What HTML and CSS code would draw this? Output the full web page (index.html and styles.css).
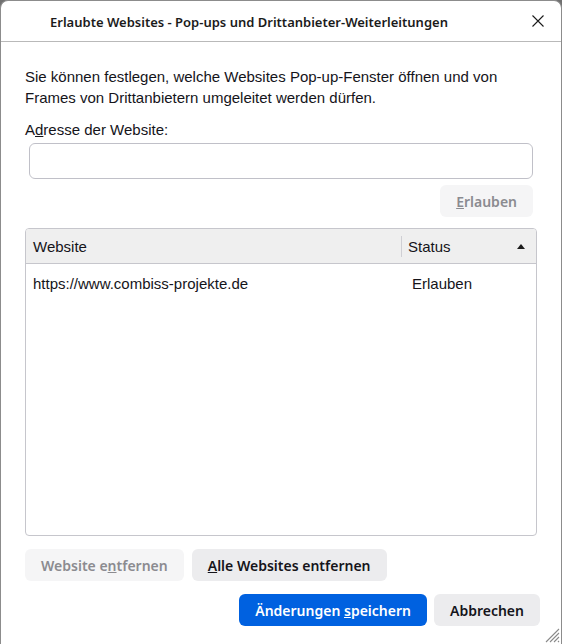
FILE: index.html
```html
<!DOCTYPE html>
<html lang="de">
<head>
<meta charset="utf-8">
<title>Erlaubte Websites</title>
<link rel="stylesheet" href="styles.css">
</head>
<body>
<div class="window">
  <div class="titlebar">
    <div class="title">Erlaubte Websites - Pop-ups und Drittanbieter-Weiterleitungen</div>
    <div class="close">
      <svg width="12" height="12" viewBox="0 0 12 12"><path d="M0.5 0.5 L11.5 11.5 M11.5 0.5 L0.5 11.5" stroke="#1b1b1b" stroke-width="1.1" fill="none"/></svg>
    </div>
  </div>
  <div class="content">
    <p class="desc">Sie können festlegen, welche Websites Pop-up-Fenster öffnen und von Frames von Drittanbietern umgeleitet werden dürfen.</p>
    <label class="label">A<u>d</u>resse der Website:</label>
    <input class="address" type="text">
    <div class="allow-row">
      <button class="btn disabled"><u>E</u>rlauben</button>
    </div>
    <div class="table">
      <div class="thead">
        <div class="th th-site">Website</div>
        <div class="th th-status"><span>Status</span>
          <svg class="sort" width="8" height="5" viewBox="0 0 8 5"><path d="M0 5 L4 0 L8 5 Z" fill="#1b1b1b"/></svg>
        </div>
      </div>
      <div class="tbody">
        <div class="tr">
          <div class="td td-site">https://www.combiss-projekte.de</div>
          <div class="td td-status">Erlauben</div>
        </div>
      </div>
    </div>
    <div class="remove-row">
      <button class="btn disabled">Website e<u>n</u>tfernen</button>
      <button class="btn"><u>A</u>lle Websites entfernen</button>
    </div>
    <div class="actions">
      <button class="btn primary">Änderungen <u>s</u>peichern</button>
      <button class="btn">Abbrechen</button>
    </div>
  </div>
  <svg class="grip" width="16" height="16" viewBox="0 0 16 16"><path d="M15 2 L2 15 M15 6 L6 15 M15 10 L10 15 M15 14 L14 15" stroke="#8a8a8a" stroke-width="1.1" fill="none"/></svg>
</div>
</body>
</html>
```

FILE: styles.css
```css
html, body {
  margin: 0;
  padding: 0;
  height: 100%;
  background: #707070;
}
body {
  font-family: "Liberation Sans", Arial, sans-serif;
  color: #15141a;
  font-size: 15px;
}
.window {
  position: relative;
  box-sizing: border-box;
  height: 100vh;
  background: #ffffff;
  border: 1px solid #8c8c8c;
  border-bottom: none;
  border-radius: 8px 8px 0 0;
  display: flex;
  flex-direction: column;
  overflow: hidden;
}
.titlebar {
  height: 40px;
  flex: none;
  display: flex;
  align-items: center;
  border-bottom: 1px solid #b9b9b9;
}
.title {
  flex: 1;
  text-align: center;
  font-family: "Noto Sans", sans-serif;
  font-weight: 600;
  font-size: 13px;
  color: #1b1b1b;
  padding-top: 1px;
}
.close {
  width: 64px;
  display: flex;
  justify-content: center;
  align-items: center;
  padding-left: 18px;
  box-sizing: border-box;
}
.content {
  flex: 1;
  display: flex;
  flex-direction: column;
  padding: 24px 24px 0 24px;
}
.desc {
  margin: 0;
  line-height: 21px;
  max-width: 480px;
}
.label {
  display: block;
  margin-top: 11px;
  line-height: 21px;
}
.address {
  box-sizing: border-box;
  height: 36px;
  margin: 3px 4px 0 4px;
  border: 1px solid #c0c0c8;
  border-radius: 6px;
  background: #fff;
  font: inherit;
}
.allow-row {
  display: flex;
  justify-content: flex-end;
  margin-top: 6px;
  padding-right: 4px;
}
.btn {
  box-sizing: border-box;
  height: 32px;
  padding: 0 16px;
  border: none;
  border-radius: 6px;
  background: #ececee;
  color: #15141a;
  font-family: "Noto Sans", sans-serif;
  font-weight: 600;
  font-size: 14px;
  cursor: default;
}
.btn.disabled {
  background: #f5f5f6;
  color: #8b8b90;
}
.btn.primary {
  background: #0061e0;
  color: #ffffff;
}
.table {
  margin-top: 11px;
  height: 308px;
  box-sizing: border-box;
  border: 1px solid #c6c6cc;
  border-radius: 4px;
  overflow: hidden;
  display: flex;
  flex-direction: column;
}
.thead {
  display: flex;
  height: 34px;
  flex: none;
  background: #efefef;
  border-bottom: 1px solid #c6c6cc;
  align-items: stretch;
}
.th {
  display: flex;
  align-items: center;
  padding-left: 7px;
}
.th-site {
  width: 368px;
}
.th-status {
  flex: 1;
  position: relative;
  padding-right: 11px;
  justify-content: space-between;
}
.th-status::before {
  content: "";
  position: absolute;
  left: 0;
  top: 7px;
  bottom: 6px;
  width: 1px;
  background: #cfcfd4;
}
.tr {
  display: flex;
  height: 38px;
  align-items: center;
}
.td-site {
  width: 370px;
  padding-left: 7px;
}
.td-status {
  padding-left: 9px;
}
.remove-row {
  display: flex;
  gap: 8px;
  margin-top: 13px;
}
.actions {
  display: flex;
  justify-content: flex-end;
  gap: 7px;
  margin-top: 13px;
  margin-right: -3px;
}
.grip {
  position: absolute;
  right: 1px;
  bottom: 1px;
}
```
